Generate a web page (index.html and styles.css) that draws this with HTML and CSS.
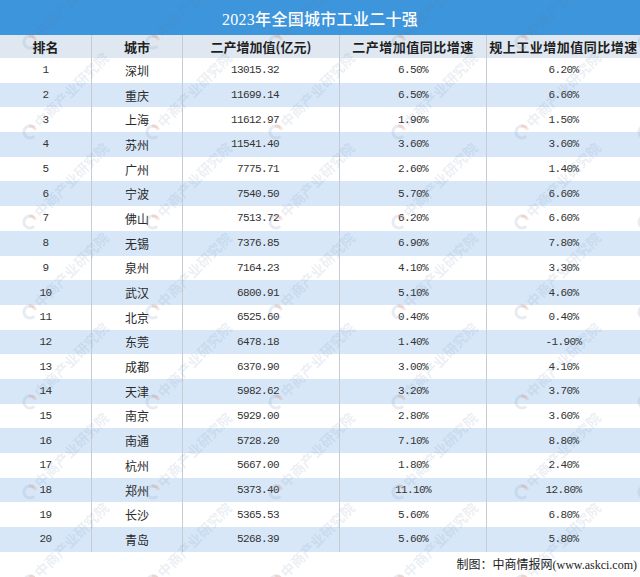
FILE: index.html
```html
<!DOCTYPE html>
<html lang="zh-CN">
<head>
<meta charset="utf-8">
<title>2023年全国城市工业二十强</title>
<link rel="stylesheet" href="styles.css">
</head>
<body>
<div class="page">
  <div class="title">2023年全国城市工业二十强</div>
  <div class="table">
    <div class="row head">
      <div class="cell">排名</div>
      <div class="cell">城市</div>
      <div class="cell">二产增加值(亿元)</div>
      <div class="cell wide">二产增加值同比增速</div>
      <div class="cell wide">规上工业增加值同比增速</div>
    </div>
    <div class="row"><div class="cell num">1</div><div class="cell">深圳</div><div class="cell num val">13015.32</div><div class="cell num">6.50%</div><div class="cell num">6.20%</div></div>
    <div class="row"><div class="cell num">2</div><div class="cell">重庆</div><div class="cell num val">11699.14</div><div class="cell num">6.50%</div><div class="cell num">6.60%</div></div>
    <div class="row"><div class="cell num">3</div><div class="cell">上海</div><div class="cell num val">11612.97</div><div class="cell num">1.90%</div><div class="cell num">1.50%</div></div>
    <div class="row"><div class="cell num">4</div><div class="cell">苏州</div><div class="cell num val">11541.40</div><div class="cell num">3.60%</div><div class="cell num">3.60%</div></div>
    <div class="row"><div class="cell num">5</div><div class="cell">广州</div><div class="cell num val">7775.71</div><div class="cell num">2.60%</div><div class="cell num">1.40%</div></div>
    <div class="row"><div class="cell num">6</div><div class="cell">宁波</div><div class="cell num val">7540.50</div><div class="cell num">5.70%</div><div class="cell num">6.60%</div></div>
    <div class="row"><div class="cell num">7</div><div class="cell">佛山</div><div class="cell num val">7513.72</div><div class="cell num">6.20%</div><div class="cell num">6.60%</div></div>
    <div class="row"><div class="cell num">8</div><div class="cell">无锡</div><div class="cell num val">7376.85</div><div class="cell num">6.90%</div><div class="cell num">7.80%</div></div>
    <div class="row"><div class="cell num">9</div><div class="cell">泉州</div><div class="cell num val">7164.23</div><div class="cell num">4.10%</div><div class="cell num">3.30%</div></div>
    <div class="row"><div class="cell num">10</div><div class="cell">武汉</div><div class="cell num val">6800.91</div><div class="cell num">5.10%</div><div class="cell num">4.60%</div></div>
    <div class="row"><div class="cell num">11</div><div class="cell">北京</div><div class="cell num val">6525.60</div><div class="cell num">0.40%</div><div class="cell num">0.40%</div></div>
    <div class="row"><div class="cell num">12</div><div class="cell">东莞</div><div class="cell num val">6478.18</div><div class="cell num">1.40%</div><div class="cell num">-1.90%</div></div>
    <div class="row"><div class="cell num">13</div><div class="cell">成都</div><div class="cell num val">6370.90</div><div class="cell num">3.00%</div><div class="cell num">4.10%</div></div>
    <div class="row"><div class="cell num">14</div><div class="cell">天津</div><div class="cell num val">5982.62</div><div class="cell num">3.20%</div><div class="cell num">3.70%</div></div>
    <div class="row"><div class="cell num">15</div><div class="cell">南京</div><div class="cell num val">5929.00</div><div class="cell num">2.80%</div><div class="cell num">3.60%</div></div>
    <div class="row"><div class="cell num">16</div><div class="cell">南通</div><div class="cell num val">5728.20</div><div class="cell num">7.10%</div><div class="cell num">8.80%</div></div>
    <div class="row"><div class="cell num">17</div><div class="cell">杭州</div><div class="cell num val">5667.00</div><div class="cell num">1.80%</div><div class="cell num">2.40%</div></div>
    <div class="row"><div class="cell num">18</div><div class="cell">郑州</div><div class="cell num val">5373.40</div><div class="cell num">11.10%</div><div class="cell num">12.80%</div></div>
    <div class="row"><div class="cell num">19</div><div class="cell">长沙</div><div class="cell num val">5365.53</div><div class="cell num">5.60%</div><div class="cell num">6.80%</div></div>
    <div class="row"><div class="cell num">20</div><div class="cell">青岛</div><div class="cell num val">5268.39</div><div class="cell num">5.60%</div><div class="cell num">5.80%</div></div>
  </div>
  <div class="footer">制图：中商情报网(www.askci.com)</div>

  <svg class="watermark" width="640" height="577" viewBox="0 0 640 577" aria-hidden="true">
    <defs>
      <g id="wm">
        <path d="M4.2 -4.2 A6 6 0 1 0 4.2 4.2" fill="none" stroke="#8ea6bf" stroke-width="3"/>
        <path d="M-1 -5.9 A6 6 0 0 1 5.6 -2" fill="none" stroke="#f07a4a" stroke-width="3"/>
        <text x="10" y="5" transform="rotate(-45)" class="wm-text">中商产业研究院</text>
      </g>
    </defs>
    <use href="#wm" x="30" y="42"/><use href="#wm" x="153" y="42"/><use href="#wm" x="276" y="42"/><use href="#wm" x="399" y="42"/><use href="#wm" x="522" y="42"/><use href="#wm" x="645" y="42"/>
    <use href="#wm" x="30" y="132"/><use href="#wm" x="153" y="132"/><use href="#wm" x="276" y="132"/><use href="#wm" x="399" y="132"/><use href="#wm" x="522" y="132"/><use href="#wm" x="645" y="132"/>
    <use href="#wm" x="30" y="222"/><use href="#wm" x="153" y="222"/><use href="#wm" x="276" y="222"/><use href="#wm" x="399" y="222"/><use href="#wm" x="522" y="222"/><use href="#wm" x="645" y="222"/>
    <use href="#wm" x="30" y="312"/><use href="#wm" x="153" y="312"/><use href="#wm" x="276" y="312"/><use href="#wm" x="399" y="312"/><use href="#wm" x="522" y="312"/><use href="#wm" x="645" y="312"/>
    <use href="#wm" x="30" y="402"/><use href="#wm" x="153" y="402"/><use href="#wm" x="276" y="402"/><use href="#wm" x="399" y="402"/><use href="#wm" x="522" y="402"/><use href="#wm" x="645" y="402"/>
    <use href="#wm" x="30" y="492"/><use href="#wm" x="153" y="492"/><use href="#wm" x="276" y="492"/><use href="#wm" x="399" y="492"/><use href="#wm" x="522" y="492"/><use href="#wm" x="645" y="492"/>
    <use href="#wm" x="30" y="582"/><use href="#wm" x="153" y="582"/><use href="#wm" x="276" y="582"/><use href="#wm" x="399" y="582"/><use href="#wm" x="522" y="582"/><use href="#wm" x="645" y="582"/>
  </svg>
</div>
</body>
</html>
```
FILE: styles.css
```css
* { box-sizing: border-box; }
html, body { margin: 0; padding: 0; background: #fff; }
.page {
  position: relative;
  width: 640px;
  height: 577px;
  overflow: hidden;
  font-family: "Noto Sans CJK SC", sans-serif;
  color: #2a2a2a;
}
.title {
  height: 35px;
  background: #3d95db;
  color: #fff;
  font-family: "Liberation Serif", "Noto Sans CJK SC", serif;
  font-size: 16px;
  font-weight: 500;
  display: flex;
  align-items: center;
  justify-content: center;
  letter-spacing: 0.3px;
}
.table {
  display: flex;
  flex-direction: column;
}
.row {
  display: grid;
  grid-template-columns: 92px 91px 157px 147px 153px;
  height: 24.7px;
  background: #fff;
}
.row:nth-child(odd) { background: #d7e7f8; }
.row.head {
  height: 23px;
  background: #dfe7f0;
  font-weight: 700;
  font-size: 13px;
  color: #1e1e1e;
}
.cell {
  display: flex;
  align-items: center;
  justify-content: center;
  border-right: 1px solid #c6ccd3;
  font-size: 12px;
  white-space: nowrap;
}
.row.head .cell { font-size: 13px; }
.row.head .cell.wide { letter-spacing: 0.5px; }
.cell:last-child { border-right: none; }
.cell.num {
  font-family: "Liberation Mono", monospace;
  font-size: 11px;
  letter-spacing: -0.6px;
  color: #333;
}
.cell.val {
  justify-content: flex-end;
  padding-right: 60px;
}
.footer {
  height: 25px;
  display: flex;
  align-items: center;
  justify-content: flex-end;
  padding-right: 3px;
  font-family: "Liberation Serif", "Noto Sans CJK SC", serif;
  font-size: 12px;
  color: #222;
}
.watermark {
  position: absolute;
  top: 0;
  left: 0;
  pointer-events: none;
}
.wm-text {
  font-family: "Noto Sans CJK SC", sans-serif;
  font-size: 14px;
  font-weight: 700;
  fill: #5f82a8;
  fill-opacity: 0.14;
}
.watermark use { opacity: 0.9; }
.watermark path { opacity: 0.22; }
```
